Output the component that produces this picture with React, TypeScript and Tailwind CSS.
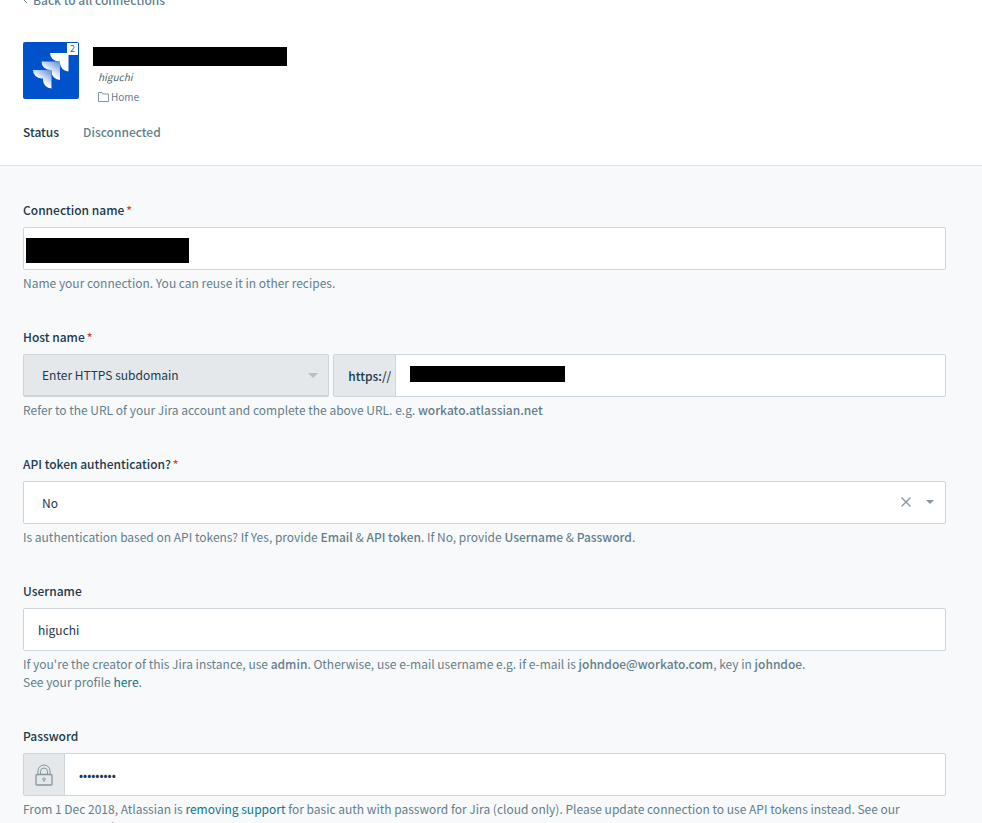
import type { ReactNode } from 'react'

interface FieldProps {
  id: string
  label: string
  required?: boolean
  hint: ReactNode
  children: ReactNode
}

function Field({ id, label, required, hint, children }: FieldProps) {
  return (
    <div>
      <label htmlFor={id} className="mb-2 block font-medium text-[#20394d]">
        {label}
        {required && <span className="ml-0.5 text-[#e0401f]">*</span>}
      </label>
      {children}
      <p className="mt-1 text-[#637f8b]">{hint}</p>
    </div>
  )
}

function JiraLogo() {
  return (
    <div className="relative h-[57px] w-14 rounded-xs bg-[#0052cc]">
      <svg viewBox="0 0 56 57" className="block h-full w-full" aria-hidden="true">
        <defs>
          <linearGradient id="fold" x1="0.85" y1="0.05" x2="0.45" y2="0.6">
            <stop offset="0" stopColor="#6f9be0" />
            <stop offset="1" stopColor="#fff" />
          </linearGradient>
        </defs>
        <path
          d="M27 11h18.500v18.500a8.500 8.500 0 0 1-8.500-8.500v-1.500h-1.500a8.500 8.500 0 0 1-8.500-8.500z"
          fill="#fff"
        />
        <path
          d="M18.500 19.500h18.500v18.500a8.500 8.500 0 0 1-8.500-8.500v-1.500h-1.500a8.500 8.500 0 0 1-8.500-8.500z"
          fill="url(#fold)"
        />
        <path
          d="M10 28h18.500v18.500a8.500 8.500 0 0 1-8.500-8.500v-1.500h-1.500a8.500 8.500 0 0 1-8.500-8.500z"
          fill="url(#fold)"
        />
      </svg>
      <span className="absolute right-px top-px flex h-3 w-[11px] items-center justify-center bg-white text-[9px] leading-3 text-[#2f5f9e]">
        2
      </span>
    </div>
  )
}

function Header() {
  return (
    <header className="border-b border-[#dfe3e8] bg-white px-[23px] pb-6">
      <a href="#" className="-mt-[9px] flex items-center font-medium text-[#637f8b]">
        <svg viewBox="0 0 10 18" className="h-[18px] w-[10px]" fill="none" stroke="currentColor">
          <path d="M4 6L1 9l3 3" />
        </svg>
        Back to all connections
      </a>
      <div className="mt-[33px] flex">
        <JiraLogo />
        <div className="ml-3.5 pt-[5px]">
          <h1 className="h-[19px] w-[194px] bg-black" aria-label="Connection" />
          <div className="ml-[5px] mt-1 text-[10px] leading-[14px] text-[#4f5f69]">
            <p className="italic">higuchi</p>
            <a href="#" className="mt-1.5 flex items-center gap-0.5 text-[#637f8b]">
              <svg
                viewBox="0 0 11 10"
                className="h-[10px] w-[11px]"
                fill="none"
                stroke="#8396a0"
              >
                <path d="M.5 9.500v-9h3.500l1 1.500h5.500v7.500z" />
              </svg>
              Home
            </a>
          </div>
        </div>
      </div>
      <dl className="mt-[19px] flex gap-6 font-medium">
        <dt className="text-[#20394d]">Status</dt>
        <dd className="text-[#637f8b]">Disconnected</dd>
      </dl>
    </header>
  )
}

function Caret() {
  return (
    <svg viewBox="0 0 10 5" className="h-[5px] w-[10px]" fill="currentColor" aria-hidden="true">
      <path d="M0 0h10L5 5z" />
    </svg>
  )
}

function LockIcon() {
  return (
    <svg viewBox="0 0 18 22" className="h-[22px] w-[18px]" fill="none" stroke="#8396a0">
      <path d="M3 10V7a6 6 0 0 1 12 0v3M5.500 10V7.500a3.500 3.500 0 0 1 7 0V10" />
      <rect x="1" y="10.500" width="16" height="10.500" rx="1" strokeWidth="1.300" />
      <path d="M9 14a1.200 1.200 0 1 1 0 2.400A1.200 1.200 0 1 1 9 14zM9 16.500v1.500" />
    </svg>
  )
}

export default function App() {
  return (
    <div className="h-screen overflow-hidden bg-[#f8f9fb] font-['Noto_Sans_CJK_JP',sans-serif] text-[12px] leading-[18px]">
      <Header />
      <form className="flex flex-col gap-9 pb-8 pl-[23px] pr-9 pt-[35px]">
        <Field
          id="name"
          label="Connection name"
          required
          hint="Name your connection. You can reuse it in other recipes."
        >
          <div className="relative">
            <input
              id="name"
              className="block h-[43px] w-full rounded-xs border border-[#cdd4da] bg-white px-3.5 text-[#20394d] outline-none"
            />
            <span className="absolute left-[3px] top-[11px] h-[25px] w-[163px] bg-black" />
          </div>
        </Field>

        <Field
          id="host"
          label="Host name"
          required
          hint={
            <>
              Refer to the URL of your Jira account and complete the above URL. e.g.{' '}
              <b className="font-medium">workato.atlassian.net</b>
            </>
          }
        >
          <div className="grid grid-cols-[1fr_2fr] gap-1">
            <div className="relative">
              <select
                aria-label="Host type"
                className="block h-[43px] w-full appearance-none rounded-xs border border-b-2 border-[#cdd4da] bg-[#e4e8eb] px-[18px] text-[#20394d] outline-none"
              >
                <option>Enter HTTPS subdomain</option>
              </select>
              <span className="pointer-events-none absolute right-[11px] top-[19px] text-[#b4c0ca]">
                <Caret />
              </span>
            </div>
            <div className="flex h-[43px] rounded-xs border border-[#cdd4da] bg-white">
              <span className="flex items-center border-r border-[#cdd4da] bg-[#e4e8eb] pl-3.5 pr-1 font-medium text-[#20394d]">
                https://
              </span>
              <div className="relative flex-1">
                <input id="host" className="h-full w-full px-3.5 text-[#20394d] outline-none" />
                <span className="absolute left-3.5 top-[11px] h-4 w-[155px] bg-black" />
              </div>
            </div>
          </div>
        </Field>

        <Field
          id="token"
          label="API token authentication?"
          required
          hint={
            <>
              Is authentication based on API tokens? If Yes, provide{' '}
              <b className="font-medium">Email</b> &amp; <b className="font-medium">API token</b>. If
              No, provide <b className="font-medium">Username</b> &amp;{' '}
              <b className="font-medium">Password</b>.
            </>
          }
        >
          <div className="relative">
            <select
              id="token"
              className="block h-[43px] w-full appearance-none rounded-xs border border-[#cdd4da] bg-white px-[18px] text-[#20394d] outline-none"
            >
              <option>No</option>
              <option>Yes</option>
            </select>
            <div className="absolute right-3 top-4 flex items-center gap-[15px] text-[#8396a0]">
              <button type="button" aria-label="Clear">
                <svg viewBox="0 0 10 10" className="h-[10px] w-[10px]" stroke="currentColor" strokeWidth="1.300">
                  <path d="M.5.5l9 9M9.500.5l-9 9" />
                </svg>
              </button>
              <svg viewBox="0 0 8 4" className="h-1 w-2" fill="currentColor" aria-hidden="true">
                <path d="M0 0h8L4 4z" />
              </svg>
            </div>
          </div>
        </Field>

        <Field
          id="username"
          label="Username"
          hint={
            <>
              If you're the creator of this Jira instance, use{' '}
              <b className="font-medium">admin</b>. Otherwise, use e-mail username e.g. if e-mail is{' '}
              <b className="font-medium">johndoe@workato.com</b>, key in{' '}
              <b className="font-medium">johndoe</b>.
              <br />
              See your profile{' '}
              <a href="#" className="text-[#08788c]">
                here
              </a>
              .
            </>
          }
        >
          <input
            id="username"
            defaultValue="higuchi"
            className="block h-[43px] w-full rounded-xs border border-[#cdd4da] bg-white px-3.5 text-[#20394d] outline-none"
          />
        </Field>

        <Field
          id="password"
          label="Password"
          hint={
            <>
              From 1 Dec 2018, Atlassian is{' '}
              <a href="#" className="text-[#08788c]">
                removing support
              </a>{' '}
              for basic auth with password for Jira (cloud only). Please update connection to use API
              tokens instead. See our announcement here
            </>
          }
        >
          <div className="flex h-[43px] rounded-xs border border-[#cdd4da] bg-white">
            <span className="flex w-[41px] items-center justify-center border-r border-[#cdd4da] bg-[#e4e8eb]">
              <LockIcon />
            </span>
            <input
              id="password"
              type="password"
              defaultValue="password1"
              className="flex-1 px-3.5 text-[#20394d] outline-none"
            />
          </div>
        </Field>
      </form>
    </div>
  )
}
